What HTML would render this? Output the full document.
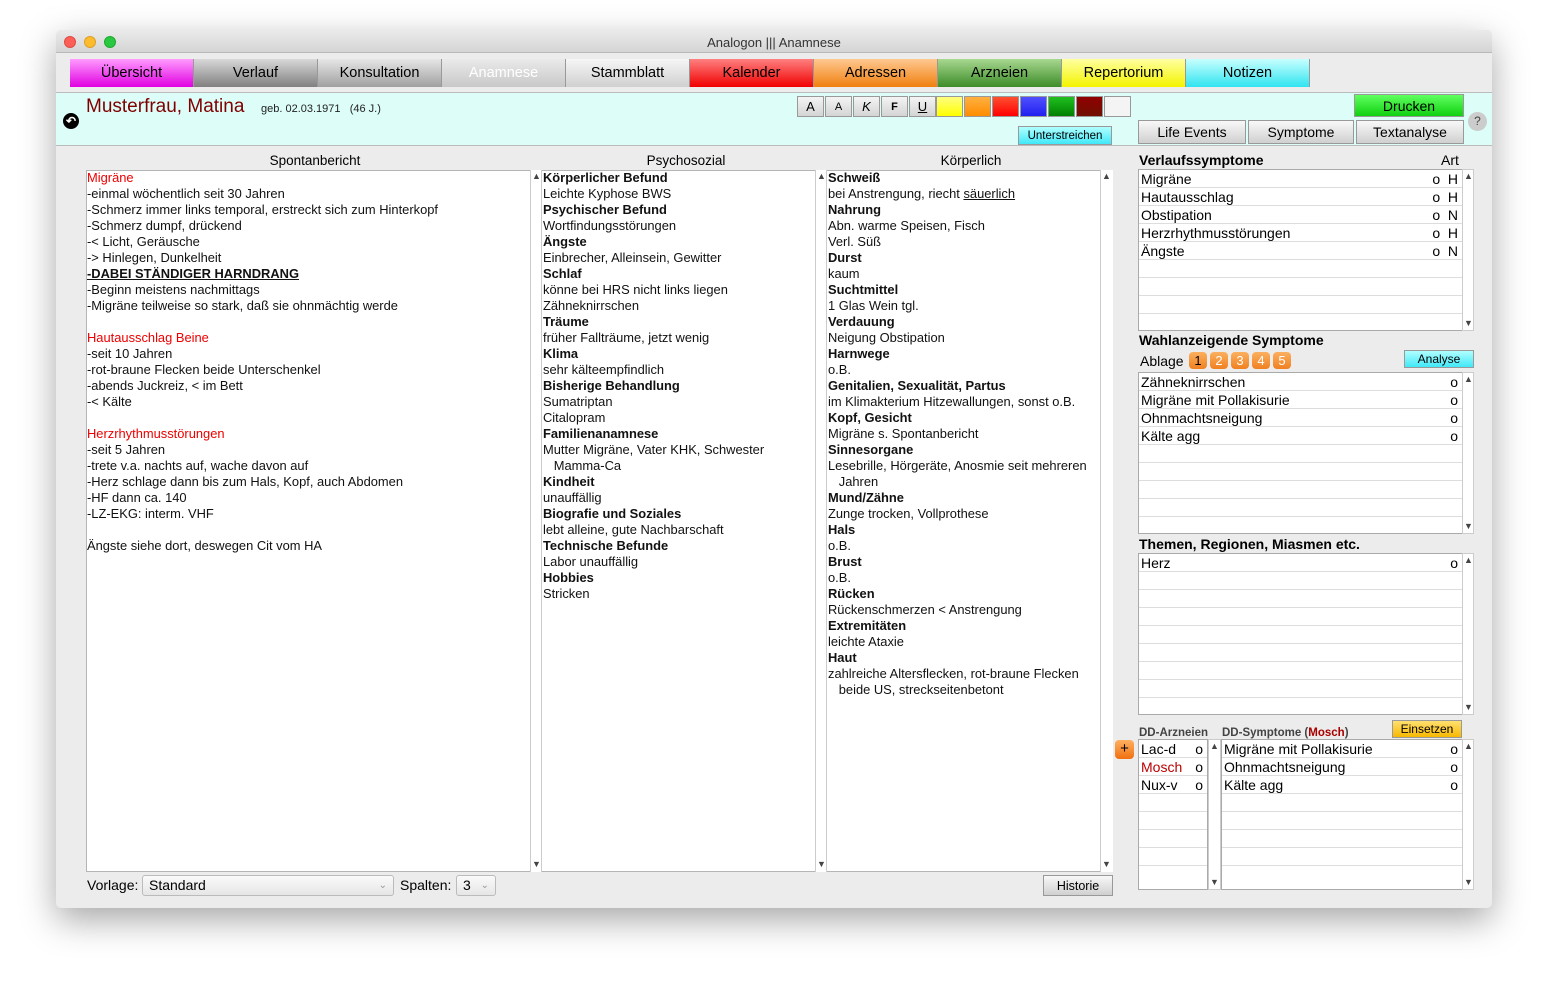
<!DOCTYPE html>
<html><head><meta charset="utf-8"><style>
*{margin:0;padding:0;box-sizing:border-box}
body{width:1548px;height:989px;background:#fff;font-family:"Liberation Sans",sans-serif;position:relative;overflow:hidden;color:#000}
.a{position:absolute}
.win{left:56px;top:30px;width:1436px;height:878px;background:#ececec;border-radius:5px;box-shadow:0 12px 35px rgba(0,0,0,.35);overflow:hidden}
.title{left:0;top:0;width:1436px;height:23px;background:linear-gradient(#ebebeb,#d5d5d5);border-bottom:1px solid #b8b8b8;text-align:center;font-size:13px;line-height:25px;color:#333}
.dot{top:6px;width:12px;height:12px;border-radius:50%}
.tab{top:29px;height:28px;width:124px;text-align:center;font-size:14.5px;line-height:28px;border-right:1px solid #999}
.hdr{left:0;top:62px;width:1436px;height:54px;background:#dcfdf8;border-top:1px solid #bbb;border-bottom:1px solid #bbb}
.fb{top:66px;width:27px;height:21px;border:1px solid #999;background:linear-gradient(#f4f4f4,#d4d4d4);font-size:13px;text-align:center;line-height:20px}
.btn{background:linear-gradient(#f8f8f8,#d0d0d0);border:1px solid #999;text-align:center;font-size:14px}
.box{background:#fff;border:1px solid #b5b5b5}
.txt{font-size:12.9px;line-height:16px;white-space:pre;color:#111}
.txt b{font-weight:bold}
.r{color:#e00}
.sb{font-size:9px;color:#444}
.lst{background:#fff;border:1px solid #aaa;font-size:14px}
.row{height:18px;line-height:18px;border-bottom:1px solid #ddd;padding-left:2px;position:relative}
.row .o{position:absolute;right:4px;top:0}
.sec{font-size:14px;font-weight:bold}
.num{top:352px;width:18px;height:17px;border-radius:4px;background:linear-gradient(#fbb060,#f08020);color:#fff;font-size:13px;text-align:center;line-height:17px}
</style></head><body>
<div class="a win">
<div class="a title">Analogon ||| Anamnese</div>
<div class="a dot" style="left:8px;background:#fc5f57;border:1px solid #de4b43"></div>
<div class="a dot" style="left:28px;background:#fdbc2e;border:1px solid #dca024"></div>
<div class="a dot" style="left:48px;background:#29c840;border:1px solid #1eaa31"></div>

<div class="a tab" style="left:14px;background:linear-gradient(#ff9cff,#e000e0)">Übersicht</div>
<div class="a tab" style="left:138px;background:linear-gradient(#d8d8d8,#808080)">Verlauf</div>
<div class="a tab" style="left:262px;background:linear-gradient(#e6e6e6,#a0a0a0)">Konsultation</div>
<div class="a tab" style="left:386px;background:linear-gradient(#eaeaea,#c8c8c8);color:#fff">Anamnese</div>
<div class="a tab" style="left:510px;background:linear-gradient(#f6f6f6,#d0d0d0)">Stammblatt</div>
<div class="a tab" style="left:634px;background:linear-gradient(#ff8080,#f00000)">Kalender</div>
<div class="a tab" style="left:758px;background:linear-gradient(#ffc890,#f08010)">Adressen</div>
<div class="a tab" style="left:882px;background:linear-gradient(#a8d890,#3c8c28)">Arzneien</div>
<div class="a tab" style="left:1006px;background:linear-gradient(#ffffa0,#f4f400)">Repertorium</div>
<div class="a tab" style="left:1130px;background:linear-gradient(#c8ffff,#30e4f0)">Notizen</div>

<div class="a hdr"></div>
<div class="a" style="left:30px;top:66px;font-size:19px;color:#800000">Musterfrau, Matina</div>
<div class="a" style="left:205px;top:73px;font-size:11px;color:#222">geb. 02.03.1971 &nbsp;&nbsp;(46 J.)</div>
<div class="a" style="left:7px;top:83px;width:16px;height:16px;border-radius:50%;background:#000;color:#fff;font-size:12px;text-align:center;line-height:16px;font-weight:bold">↶</div>

<div class="a fb" style="left:741px">A</div>
<div class="a fb" style="left:769px;font-size:11px">A</div>
<div class="a fb" style="left:797px;font-style:italic">K</div>
<div class="a fb" style="left:825px;font-weight:bold;font-size:11px">F</div>
<div class="a fb" style="left:853px;text-decoration:underline">U</div>
<div class="a fb" style="left:880px;background:linear-gradient(#ffff80,#ffff00)"></div>
<div class="a fb" style="left:908px;background:linear-gradient(#ffb040,#ff8c00)"></div>
<div class="a fb" style="left:936px;background:linear-gradient(#ff5030,#ff0000)"></div>
<div class="a fb" style="left:964px;background:linear-gradient(#5050ff,#2020f0)"></div>
<div class="a fb" style="left:992px;background:linear-gradient(#20c020,#008000)"></div>
<div class="a fb" style="left:1020px;background:linear-gradient(#900000,#701000)"></div>
<div class="a fb" style="left:1048px;background:#f4f4f4"></div>
<div class="a btn" style="left:962px;top:96px;width:94px;height:19px;font-size:11.5px;line-height:19px;background:linear-gradient(#b0ffff,#40e8f8)">Unterstreichen</div>
<div class="a btn" style="left:1298px;top:64px;width:110px;height:23px;line-height:23px;background:linear-gradient(#60ff60,#10d010)">Drucken</div>
<div class="a btn" style="left:1082px;top:90px;width:108px;height:24px;line-height:23px">Life Events</div>
<div class="a btn" style="left:1192px;top:90px;width:106px;height:24px;line-height:23px">Symptome</div>
<div class="a btn" style="left:1300px;top:90px;width:108px;height:24px;line-height:23px">Textanalyse</div>
<div class="a" style="left:1412px;top:82px;width:19px;height:19px;border-radius:50%;background:#ccc;font-size:12px;text-align:center;line-height:19px;color:#444">?</div>

<div class="a" style="left:30px;top:123px;width:458px;text-align:center;font-size:13.5px">Spontanbericht</div>
<div class="a" style="left:486px;top:123px;width:288px;text-align:center;font-size:13.5px">Psychosozial</div>
<div class="a" style="left:770px;top:123px;width:290px;text-align:center;font-size:13.5px">Körperlich</div>

<div class="a box" style="left:30px;top:140px;width:1027px;height:702px"></div>
<div class="a" style="left:474px;top:140px;width:12px;height:702px;border-left:1px solid #ccc;border-right:1px solid #ccc;background:#fff"></div>
<div class="a" style="left:759px;top:140px;width:12px;height:702px;border-left:1px solid #ccc;border-right:1px solid #ccc;background:#fff"></div>
<div class="a" style="left:1044px;top:140px;width:13px;height:702px;border-left:1px solid #ccc;background:#fff"></div>
<div class="a sb" style="left:476px;top:141px">▲</div><div class="a sb" style="left:476px;top:829px">▼</div>
<div class="a sb" style="left:761px;top:141px">▲</div><div class="a sb" style="left:761px;top:829px">▼</div>
<div class="a sb" style="left:1046px;top:141px">▲</div><div class="a sb" style="left:1046px;top:829px">▼</div>

<div class="a txt" style="left:31px;top:140px"><span class="r">Migräne</span>
-einmal wöchentlich seit 30 Jahren
-Schmerz immer links temporal, erstreckt sich zum Hinterkopf
-Schmerz dumpf, drückend
-&lt; Licht, Geräusche
-&gt; Hinlegen, Dunkelheit
<b><u>-DABEI STÄNDIGER HARNDRANG</u></b>
-Beginn meistens nachmittags
-Migräne teilweise so stark, daß sie ohnmächtig werde

<span class="r">Hautausschlag Beine</span>
-seit 10 Jahren
-rot-braune Flecken beide Unterschenkel
-abends Juckreiz, &lt; im Bett
-&lt; Kälte

<span class="r">Herzrhythmusstörungen</span>
-seit 5 Jahren
-trete v.a. nachts auf, wache davon auf
-Herz schlage dann bis zum Hals, Kopf, auch Abdomen
-HF dann ca. 140
-LZ-EKG: interm. VHF

Ängste siehe dort, deswegen Cit vom HA</div>

<div class="a txt" style="left:487px;top:140px"><b>Körperlicher Befund</b>
Leichte Kyphose BWS
<b>Psychischer Befund</b>
Wortfindungsstörungen
<b>Ängste</b>
Einbrecher, Alleinsein, Gewitter
<b>Schlaf</b>
könne bei HRS nicht links liegen
Zähneknirrschen
<b>Träume</b>
früher Fallträume, jetzt wenig
<b>Klima</b>
sehr kälteempfindlich
<b>Bisherige Behandlung</b>
Sumatriptan
Citalopram
<b>Familienanamnese</b>
Mutter Migräne, Vater KHK, Schwester
   Mamma-Ca
<b>Kindheit</b>
unauffällig
<b>Biografie und Soziales</b>
lebt alleine, gute Nachbarschaft
<b>Technische Befunde</b>
Labor unauffällig
<b>Hobbies</b>
Stricken</div>

<div class="a txt" style="left:772px;top:140px"><b>Schweiß</b>
bei Anstrengung, riecht <u>säuerlich</u>
<b>Nahrung</b>
Abn. warme Speisen, Fisch
Verl. Süß
<b>Durst</b>
kaum
<b>Suchtmittel</b>
1 Glas Wein tgl.
<b>Verdauung</b>
Neigung Obstipation
<b>Harnwege</b>
o.B.
<b>Genitalien, Sexualität, Partus</b>
im Klimakterium Hitzewallungen, sonst o.B.
<b>Kopf, Gesicht</b>
Migräne s. Spontanbericht
<b>Sinnesorgane</b>
Lesebrille, Hörgeräte, Anosmie seit mehreren
   Jahren
<b>Mund/Zähne</b>
Zunge trocken, Vollprothese
<b>Hals</b>
o.B.
<b>Brust</b>
o.B.
<b>Rücken</b>
Rückenschmerzen &lt; Anstrengung
<b>Extremitäten</b>
leichte Ataxie
<b>Haut</b>
zahlreiche Altersflecken, rot-braune Flecken
   beide US, streckseitenbetont</div>

<div class="a" style="left:31px;top:847px;font-size:14px">Vorlage:</div>
<div class="a btn" style="left:86px;top:845px;width:252px;height:21px;border-radius:3px;text-align:left;padding-left:6px;font-size:14px;line-height:19px;background:linear-gradient(#fafafa,#e6e6e6);border-color:#bbb">Standard<span style="position:absolute;right:6px;color:#999;font-size:10px">⌄</span></div>
<div class="a" style="left:344px;top:847px;font-size:14px">Spalten:</div>
<div class="a btn" style="left:400px;top:845px;width:40px;height:21px;border-radius:3px;text-align:left;padding-left:6px;font-size:14px;line-height:19px;background:linear-gradient(#fafafa,#e6e6e6);border-color:#bbb">3<span style="position:absolute;right:6px;color:#999;font-size:10px">⌄</span></div>
<div class="a btn" style="left:987px;top:845px;width:70px;height:21px;font-size:12.5px;line-height:21px">Historie</div>

<div class="a sec" style="left:1083px;top:122px">Verlaufssymptome</div>
<div class="a" style="left:1385px;top:122px;font-size:14px">Art</div>
<div class="a lst" style="left:1082px;top:139px;width:325px;height:162px">
<div class="row">Migräne<span class="o">o &nbsp;H</span></div>
<div class="row">Hautausschlag<span class="o">o &nbsp;H</span></div>
<div class="row">Obstipation<span class="o">o &nbsp;N</span></div>
<div class="row">Herzrhythmusstörungen<span class="o">o &nbsp;H</span></div>
<div class="row">Ängste<span class="o">o &nbsp;N</span></div>
<div class="row"></div><div class="row"></div><div class="row"></div>
</div>
<div class="a" style="left:1406px;top:139px;width:12px;height:162px;background:#fff;border:1px solid #ccc"></div>
<div class="a sb" style="left:1408px;top:141px">▲</div><div class="a sb" style="left:1408px;top:288px">▼</div>

<div class="a sec" style="left:1083px;top:302px">Wahlanzeigende Symptome</div>
<div class="a" style="left:1084px;top:323px;font-size:14px">Ablage</div>
<div class="a num" style="left:1133px;top:322px;color:#000">1</div>
<div class="a num" style="left:1154px;top:322px">2</div>
<div class="a num" style="left:1175px;top:322px">3</div>
<div class="a num" style="left:1196px;top:322px">4</div>
<div class="a num" style="left:1217px;top:322px">5</div>
<div class="a btn" style="left:1348px;top:320px;width:70px;height:18px;font-size:12px;line-height:17px;background:linear-gradient(#b0ffff,#40e8f8)">Analyse</div>
<div class="a lst" style="left:1082px;top:342px;width:325px;height:162px">
<div class="row">Zähneknirrschen<span class="o">o</span></div>
<div class="row">Migräne mit Pollakisurie<span class="o">o</span></div>
<div class="row">Ohnmachtsneigung<span class="o">o</span></div>
<div class="row">Kälte agg<span class="o">o</span></div>
<div class="row"></div><div class="row"></div><div class="row"></div><div class="row"></div>
</div>
<div class="a" style="left:1406px;top:342px;width:12px;height:162px;background:#fff;border:1px solid #ccc"></div>
<div class="a sb" style="left:1408px;top:344px">▲</div><div class="a sb" style="left:1408px;top:491px">▼</div>

<div class="a sec" style="left:1083px;top:506px">Themen, Regionen, Miasmen etc.</div>
<div class="a lst" style="left:1082px;top:523px;width:325px;height:162px">
<div class="row">Herz<span class="o">o</span></div>
<div class="row"></div><div class="row"></div><div class="row"></div><div class="row"></div><div class="row"></div><div class="row"></div><div class="row"></div>
</div>
<div class="a" style="left:1406px;top:523px;width:12px;height:162px;background:#fff;border:1px solid #ccc"></div>
<div class="a sb" style="left:1408px;top:525px">▲</div><div class="a sb" style="left:1408px;top:672px">▼</div>

<div class="a" style="left:1083px;top:697px;font-size:11.5px;font-weight:bold;color:#444">DD-Arzneien</div>
<div class="a" style="left:1166px;top:697px;font-size:11.5px;font-weight:bold;color:#444">DD-Symptome (<span style="color:#a00">Mosch</span>)</div>
<div class="a btn" style="left:1336px;top:690px;width:70px;height:18px;font-size:12px;line-height:17px;background:linear-gradient(#ffe070,#f8b800)">Einsetzen</div>
<div class="a" style="left:1059px;top:710px;width:19px;height:19px;border-radius:4px;background:linear-gradient(#ffb060,#f07010);text-align:center;font-size:15px;line-height:18px">+</div>
<div class="a lst" style="left:1082px;top:709px;width:70px;height:151px">
<div class="row">Lac-d<span class="o">o</span></div>
<div class="row" style="color:#b00">Mosch<span class="o" style="color:#000">o</span></div>
<div class="row">Nux-v<span class="o">o</span></div>
<div class="row"></div><div class="row"></div><div class="row"></div><div class="row"></div>
</div>
<div class="a" style="left:1152px;top:709px;width:13px;height:151px;background:#fff;border:1px solid #ccc"></div>
<div class="a sb" style="left:1154px;top:711px">▲</div><div class="a sb" style="left:1154px;top:847px">▼</div>
<div class="a lst" style="left:1165px;top:709px;width:242px;height:151px">
<div class="row">Migräne mit Pollakisurie<span class="o">o</span></div>
<div class="row">Ohnmachtsneigung<span class="o">o</span></div>
<div class="row">Kälte agg<span class="o">o</span></div>
<div class="row"></div><div class="row"></div><div class="row"></div><div class="row"></div>
</div>
<div class="a" style="left:1406px;top:709px;width:12px;height:151px;background:#fff;border:1px solid #ccc"></div>
<div class="a sb" style="left:1408px;top:711px">▲</div><div class="a sb" style="left:1408px;top:847px">▼</div>
</div>
</body></html>
